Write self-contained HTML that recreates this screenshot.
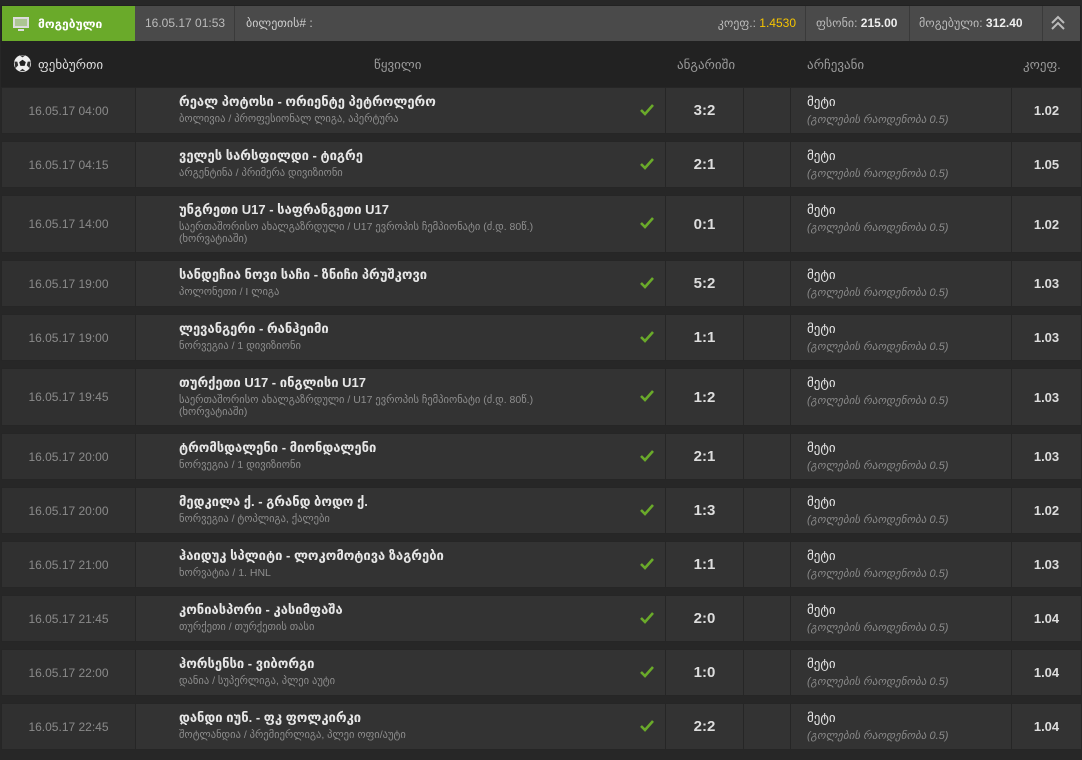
<!DOCTYPE html><html><head><meta charset="utf-8"><style>
body{margin:0;width:1082px;height:760px;background:#272727;font-family:"Liberation Sans","DejaVu Sans",sans-serif;position:relative;overflow:hidden}
.a{position:absolute;box-sizing:border-box}
.top{top:5px;left:1px;width:1080px;height:37px;background:#4a4a4a;border:1px solid #222}
.hd{top:42px;left:1px;width:1080px;height:45px;background:#222;color:#9a9a9a;font-size:13px}
.row{left:1px;width:1080px;background:#333;border:1px solid #262626}
.c{position:absolute;top:0;bottom:0;box-sizing:border-box;background:#333;border-right:1px solid #262626}
.dt{left:0;width:134px;background:#303030;color:#8a8a8a;font-size:12px;display:flex;align-items:center;justify-content:center}
.m{left:134px;width:530px;padding:6px 0 0 43px;color:#e6e6e6;font-size:13px;font-weight:bold}
.m small{display:block;font-weight:normal;font-size:10.5px;color:#8e8e8e;margin-top:3px;line-height:12px}
.ck{position:absolute;right:10px;top:50%;margin-top:-8px}
.sc{left:664px;width:78px;color:#ddd;font-weight:bold;font-size:15px;display:flex;align-items:center;justify-content:center}
.e{left:742px;width:47px}
.ch{left:789px;width:221px;padding:6px 0 0 16px;color:#e6e6e6;font-size:13px}
.ch i{display:block;font-size:11px;color:#8a8a8a;margin-top:3px}
.od{left:1010px;width:69px;border-right:0;color:#ddd;font-weight:bold;font-size:13px;display:flex;align-items:center;justify-content:center}
</style></head><body>
<div class="a top">
<div class="a" style="left:0;top:0;width:133px;height:35px;background:#6aaa2a;color:#fff;font-size:12px;font-weight:bold;padding:11px 0 0 36px">მოგებული
<svg class="a" style="left:11px;top:11px" width="16" height="15" viewBox="0 0 16 15"><rect x="1" y="1" width="14" height="9" fill="none" stroke="#ddd" stroke-width="2"/><rect x="1" y="1" width="14" height="9" fill="#d8d8d8" opacity=".6"/><rect x="5" y="12" width="6" height="2" fill="#ddd"/></svg></div>
<div class="a" style="left:133px;top:0;width:100px;height:35px;border-right:1px solid #3a3a3a;color:#bbb;font-size:12px;padding:10px 0 0 10px">16.05.17 01:53</div>
<div class="a" style="left:244px;top:10px;color:#ccc;font-size:12px">ბილეთის# :</div>
<div class="a" style="left:600px;top:0;width:204px;height:35px;border-right:1px solid #3a3a3a;text-align:right;padding:10px 9px 0 0;color:#bbb;font-size:12px">კოეფ.: <span style="color:#f5c400">1.4530</span></div>
<div class="a" style="left:804px;top:0;width:104px;height:35px;border-right:1px solid #3a3a3a;padding:10px 0 0 10px;color:#bbb;font-size:12px">ფსონი: <b style="color:#eee">215.00</b></div>
<div class="a" style="left:908px;top:0;width:133px;height:35px;border-right:1px solid #3a3a3a;padding:10px 0 0 9px;color:#bbb;font-size:12px">მოგებული: <b style="color:#eee">312.40</b></div>
<svg class="a" style="left:1048px;top:9px" width="16" height="16" viewBox="0 0 16 16" fill="none" stroke="#bbb" stroke-width="2"><path d="M2 8l6-6 6 6M2 14l6-6 6 6"/></svg>
</div>
<div class="a hd">
<svg class="a" style="left:12px;top:12px" width="19" height="19" viewBox="0 0 20 20"><circle cx="10" cy="10" r="9" fill="#eee"/><path d="M10 6l3.5 2.5-1.3 4h-4.4l-1.3-4z" fill="#222"/><path d="M1.5 8l3 0 1 4-3 3M18.5 8l-3 0-1 4 3 3M7 1.5l3 2 3-2M7 18l3-2.5 3 2.5" fill="#333"/></svg>
<div class="a" style="left:37px;top:15px;color:#ddd">ფეხბურთი</div>
<div class="a" style="left:373px;top:15px">წყვილი</div>
<div class="a" style="left:676px;top:15px">ანგარიში</div>
<div class="a" style="left:806px;top:15px">არჩევანი</div>
<div class="a" style="left:1022px;top:15px">კოეფ.</div>
</div>
<div id="rows"></div>
<script>
var d=[["04:00","რეალ პოტოსი - ორიენტე პეტროლერო","ბოლივია / პროფესიონალ ლიგა, აპერტურა","3:2","1.02",0],
["04:15","ველეს სარსფილდი - ტიგრე","არგენტინა / პრიმერა დივიზიონი","2:1","1.05",0],
["14:00","უნგრეთი U17 - საფრანგეთი U17","საერთაშორისო ახალგაზრდული / U17 ევროპის ჩემპიონატი (ძ.დ. 80წ.) (ხორვატიაში)","0:1","1.02",1],
["19:00","სანდეჩია ნოვი საჩი - ზნიჩი პრუშკოვი","პოლონეთი / I ლიგა","5:2","1.03",0],
["19:00","ლევანგერი - რანჰეიმი","ნორვეგია / 1 დივიზიონი","1:1","1.03",0],
["19:45","თურქეთი U17 - ინგლისი U17","საერთაშორისო ახალგაზრდული / U17 ევროპის ჩემპიონატი (ძ.დ. 80წ.) (ხორვატიაში)","1:2","1.03",1],
["20:00","ტრომსდალენი - მიონდალენი","ნორვეგია / 1 დივიზიონი","2:1","1.03",0],
["20:00","მედკილა ქ. - გრანდ ბოდო ქ.","ნორვეგია / ტოპლიგა, ქალები","1:3","1.02",0],
["21:00","ჰაიდუკ სპლიტი - ლოკომოტივა ზაგრები","ხორვატია / 1. HNL","1:1","1.03",0],
["21:45","კონიასპორი - კასიმფაშა","თურქეთი / თურქეთის თასი","2:0","1.04",0],
["22:00","ჰორსენსი - ვიბორგი","დანია / სუპერლიგა, პლეი აუტი","1:0","1.04",0],
["22:45","დანდი იუნ. - ფკ ფოლკირკი","შოტლანდია / პრემიერლიგა, პლეი ოფი/აუტი","2:2","1.04",0]];
var y=87,h="";
d.forEach(function(r){var hh=r[5]?58:47;
h+='<div class="a row" style="top:'+y+'px;height:'+hh+'px"><div class="c dt">16.05.17 '+r[0]+'</div><div class="c m">'+r[1]+'<small style="width:412px">'+r[2]+'</small><svg class="ck" width="16" height="14" viewBox="0 0 16 14"><path d="M2 7l4 4 8-9" fill="none" stroke="#6aaa2a" stroke-width="2.6"/></svg></div><div class="c sc">'+r[3]+'</div><div class="c e"></div><div class="c ch">მეტი<i>(გოლების რაოდენობა 0.5)</i></div><div class="c od">'+r[4]+'</div></div>';
y+=hh+7;});
document.getElementById("rows").innerHTML=h;
</script>
</body></html>
